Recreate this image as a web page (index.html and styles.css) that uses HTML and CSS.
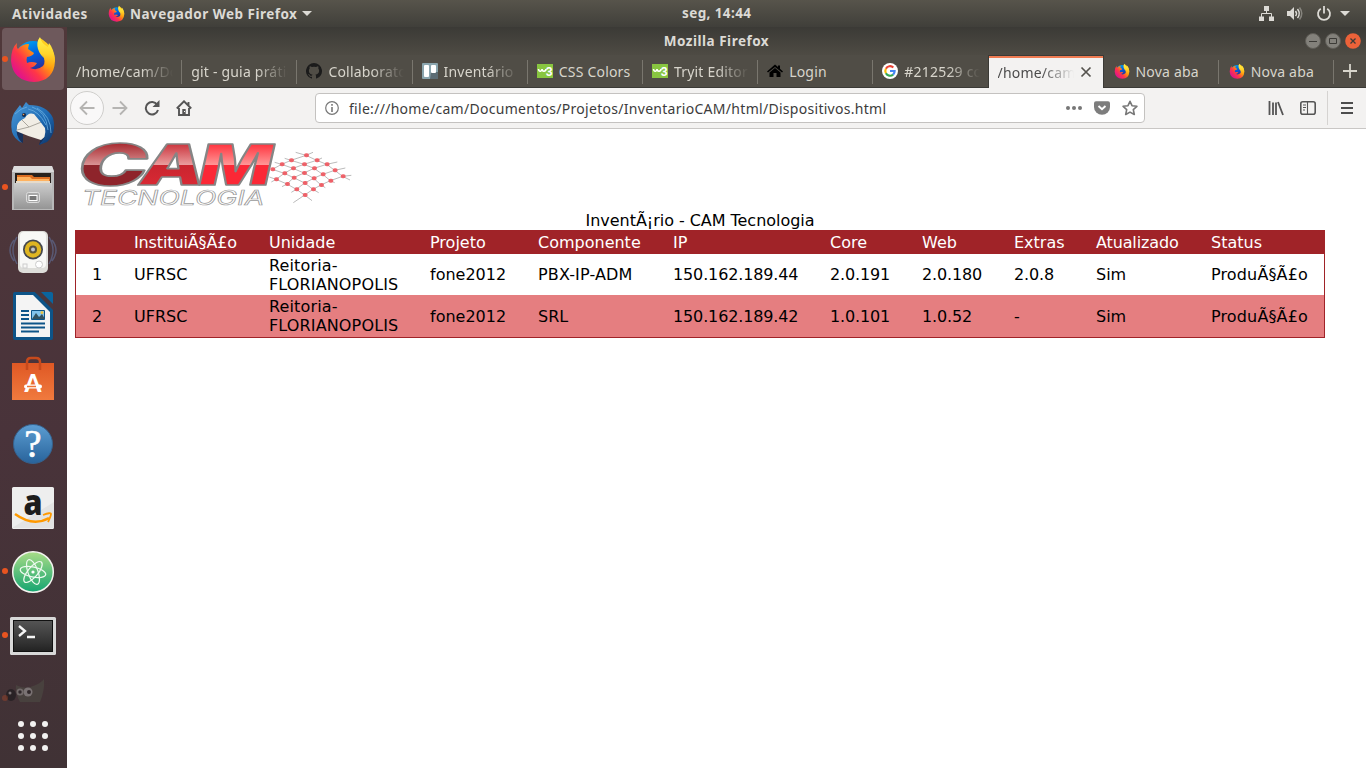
FILE: index.html
```html
<!DOCTYPE html>
<html lang="pt-BR">
<head>
<meta charset="utf-8">
<title>Mozilla Firefox</title>
<link rel="stylesheet" href="styles.css">
</head>
<body>
<svg class="defs" width="0" height="0">
  <defs>
    <linearGradient id="fxBody" x1="0.9" y1="0.1" x2="0.15" y2="0.8"><stop offset="0" stop-color="#ffe226"/><stop offset=".4" stop-color="#ff980e"/><stop offset=".7" stop-color="#ff3647"/><stop offset="1" stop-color="#e31587"/></linearGradient>
    <linearGradient id="fxGlobe" x1="0" y1="0" x2=".4" y2="1"><stop offset="0" stop-color="#00b3f4"/><stop offset=".5" stop-color="#0060df"/><stop offset="1" stop-color="#362487"/></linearGradient>
    <linearGradient id="fxTail" x1="0" y1="0" x2="0" y2="1"><stop offset="0" stop-color="#fff44f"/><stop offset=".5" stop-color="#ffd52c"/><stop offset="1" stop-color="#ffa60e" stop-opacity="0"/></linearGradient>
    <symbol id="firefox" viewBox="0 0 48 48">
      <circle cx="24" cy="24" r="18" fill="url(#fxGlobe)"/>
      <path fill="url(#fxBody)" d="M8 8 Q7 12 9 14 Q13 9 20 9 L19 14 L25 18 Q24 21 18 22 Q17 25 18 28 Q22 26 28 28 Q26 32 21 33 Q28 36 34 31 Q37 27 34 20 Q29 14 31 3 Q46 12 46 26 Q45 46 25 47 Q4 46 2 26 Q2 13 8 8Z"/>
      <path fill="url(#fxTail)" d="M31 2 Q27 7 29 14 Q31 20 35 23 Q38 29 33 36 Q44 34 46 25 Q45 14 40 8 L39 12 Q32 8 31 2Z"/>
    </symbol>
    <symbol id="w3" viewBox="0 0 16 16"><path fill="#88c540" d="M0 1h16v14H0z"/><path d="M1.500 6q.3 2.500 2 2.200Q5 8 5 6q.2 2.300 2 2.200Q9 8 9 6" fill="none" stroke="#fff" stroke-width="1.600"/><text x="8.700" y="12.500" font-size="12" font-weight="700" fill="#fff" font-family="Roboto, sans-serif">3</text></symbol>
  </defs>
</svg>

<header class="panel">
  <div class="panel-left">
    <span class="activities">Atividades</span>
    <svg width="17" height="17"><use href="#firefox"/></svg>
    <span class="appname">Navegador Web Firefox</span>
    <i class="caret"></i>
  </div>
  <div class="clock">seg, 14:44</div>
  <div class="panel-right">
    <svg width="16" height="16" viewBox="0 0 16 16"><path fill="#dcdad5" d="M5 0h5v5H5zM0 10.500h5V15H0zM10 10.500h5V15h-5z"/><path d="M7.500 5v2.500M2.500 11V7.500h10V11" fill="none" stroke="#dcdad5"/></svg>
    <svg width="16" height="16" viewBox="0 0 16 16"><path fill="#dcdad5" d="M0 5h3l4-4v13l-4-4H0z"/><g fill="none" stroke="#dcdad5" stroke-width="1.500"><path d="M8.500 5q2 2.500 0 5"/><path d="M10.500 3q3.500 4.500 0 9"/><path d="M12.500 1.500q4.500 6 0 12" opacity=".4"/></g></svg>
    <svg width="16" height="16" viewBox="0 0 16 16"><path d="M4.800 2.800a6 6 0 1 0 6.400 0M8 0v7.500" fill="none" stroke="#dcdad5" stroke-width="1.800"/></svg>
    <i class="caret"></i>
  </div>
</header>

<div class="desktop">
  <nav class="dock">
    <div class="slot active running"><svg width="48" height="48" viewBox="0 0 48 48"><use href="#firefox"/></svg></div>
    <div class="slot"><svg width="48" height="48" viewBox="0 0 48 48">
      <defs><linearGradient id="tb" x1="0" y1="0" x2="1" y2="1"><stop offset="0" stop-color="#4c9bda"/><stop offset=".6" stop-color="#1b67b0"/><stop offset="1" stop-color="#0d2e60"/></linearGradient></defs>
      <path fill="#18305a" d="M3 26Q5 39 14 43L14 34zM30 45Q44 40 45 26L34 30z"/>
      <path fill="#f1ede5" d="M9 20L22 12L37 19L38 35L32 40Q18 36 7 31z"/><path d="M12 19L20 27L35 21M20 27L8 30" stroke="#aaa69d" fill="none"/>
      <path fill="url(#tb)" d="M3 32Q1 21 5 13L11 5L13 8L17 2L20 5Q38 5 44 18Q48 33 38 42L30 45Q38 37 36 28Q31 21 25 14Q19 12 16 18Q9 21 8 26Q6 36 13 43Q5 39 3 32z"/>
      <path d="M23 7Q37 11 39 30M28 8Q42 16 42 33M19 9Q30 11 37 25M6 14Q12 8 18 7" stroke="#6bb0e2" stroke-width=".8" fill="none"/><circle cx="15" cy="15" r="2" fill="#12294b"/><circle cx="14.500" cy="14.500" r=".8" fill="#f79b4d"/>
    </svg></div>
    <div class="slot running"><svg width="48" height="48" viewBox="0 0 48 48">
      <defs><linearGradient id="fl" x1="0" y1="0" x2="0" y2="1"><stop offset="0" stop-color="#cdcdcd"/><stop offset="1" stop-color="#959595"/></linearGradient></defs>
      <path fill="#b8b8b8" d="M5 2h38l2 5v39H3V7z"/><path fill="#ddd" d="M5 2h38l2 6H3z"/><path fill="#28211d" d="M6 9h36v13H6z"/><path fill="#dc6e23" d="M8 11h15l2 2h16v8H8z"/><path fill="#ffb25f" d="M8 13h13l2 2h17v2H8z"/><path fill="#e7dbc9" d="M7 17h34v3H7z"/><path fill="url(#fl)" d="M5 19h38v26H5z"/><rect x="17.500" y="28.500" width="13" height="10" rx="2" fill="#a8a8a8" stroke="#ddd"/><rect x="20" y="31.500" width="8" height="5" fill="#777" stroke="#fff"/>
    </svg></div>
    <div class="slot"><svg width="48" height="48" viewBox="0 0 48 48">
      <g fill="none" stroke="#667cac" stroke-width="1.500" opacity=".5"><path d="M8 9Q0 22 8 36M5 12Q-3 22 5 33M40 9Q48 22 40 36M43 12Q51 22 43 33"/></g>
      <rect x="9" y="3" width="30" height="42" rx="5" fill="#dededa"/><rect x="11" y="4" width="26" height="36" rx="4" fill="#f8f8f6"/><circle cx="24" cy="21.500" r="10" fill="#44474d"/><circle cx="24" cy="21.500" r="8.300" fill="#dfb521"/><circle cx="24" cy="21.500" r="4" fill="#5a5340"/><circle cx="24" cy="21.500" r="2" fill="#c0c4cc"/><circle cx="30" cy="36.500" r="3.500" fill="#fff" stroke="#ccc"/><rect x="14" y="36" width="4" height="4" fill="none" stroke="#ccc"/>
    </svg></div>
    <div class="slot"><svg width="48" height="48" viewBox="0 0 48 48">
      <path fill="#0d5488" d="M4 2Q4 0 6 0h20l18 16v30q0 2-2 2H6q-2 0-2-2z"/><path fill="#f4f4f4" d="M7 3h17l17 17v25H7z"/><path fill="#4a373c" d="M26 0h6l12 12v6z"/><path fill="#0a659e" d="M32 0h10q2 0 2 2v10z"/><g stroke="#0d5488" stroke-width="2"><path d="M12 19h8M12 23h8M12 27h8M12 31.500h24M12 35.500h24M12 39.500h18"/></g><path fill="#82c3eb" stroke="#0d5488" d="M22.500 18.500h13v9h-13z"/><path fill="#33525f" d="M23 27l4-6 3 4 3-3 3 5z"/><circle cx="33" cy="20.500" r="1.500" fill="#e9c344"/>
    </svg></div>
    <div class="slot"><svg width="48" height="48" viewBox="0 0 48 48">
      <defs><linearGradient id="sw" x1="0" y1="0" x2="0" y2="1"><stop offset="0" stop-color="#df5824"/><stop offset="1" stop-color="#f07a3e"/></linearGradient></defs>
      <path fill="url(#sw)" d="M3 7h42v37H3z"/><path fill="none" stroke="#c74a1c" stroke-width="2.500" d="M18 14V6q0-4 4-4h5q4 0 4 4v8"/>
      <text x="24" y="36" text-anchor="middle" font-family="Lato, sans-serif" font-size="24" font-weight="900" fill="#fff">A</text><rect x="15" y="28.500" width="18" height="4" rx="2" fill="#fff"/><path d="M18 30.500h9" stroke="#ee7336" stroke-width="1.500"/>
    </svg></div>
    <div class="slot"><svg width="48" height="48" viewBox="0 0 48 48">
      <defs><linearGradient id="hp" x1="0" y1="0" x2="0" y2="1"><stop offset="0" stop-color="#5c9dd2"/><stop offset="1" stop-color="#28639b"/></linearGradient></defs>
      <circle cx="24" cy="24" r="19.500" fill="url(#hp)" stroke="#36618c"/><text x="24" y="36.500" text-anchor="middle" font-family="Liberation Serif, serif" font-size="39" fill="#fff" stroke="#fff" stroke-width=".6">?</text>
    </svg></div>
    <div class="slot"><svg width="48" height="48" viewBox="0 0 48 48">
      <rect x="3" y="3" width="42" height="42" rx="1.500" fill="#eee"/><path fill="#e3e3e3" d="M3 44L45 18v26z"/><text x="24" y="31" text-anchor="middle" font-family="Open Sans, sans-serif" font-weight="800" font-size="36" fill="#1d1d1d" textLength="19" lengthAdjust="spacingAndGlyphs">a</text><path d="M6 30Q24 43 40 34" fill="none" stroke="#f90" stroke-width="2.500"/><path d="M34 31q8-3 8-1t-3 8" fill="none" stroke="#f90" stroke-width="1.800"/>
    </svg></div>
    <div class="slot running"><svg width="48" height="48" viewBox="0 0 48 48">
      <defs><linearGradient id="at" x1="0" y1="0" x2="0" y2="1"><stop offset="0" stop-color="#a9dc87"/><stop offset="1" stop-color="#14a570"/></linearGradient></defs>
      <circle cx="24" cy="24" r="20.300" fill="url(#at)" stroke="#f3f3ef" stroke-width="1.500"/><g fill="none" stroke="#effaf1" stroke-width="1.200"><ellipse cx="24" cy="24" rx="13" ry="5" transform="rotate(12 24 24)"/><ellipse cx="24" cy="24" rx="13" ry="5" transform="rotate(70 24 24)"/><ellipse cx="24" cy="24" rx="13" ry="5" transform="rotate(130 24 24)"/></g><circle cx="24" cy="24" r="1.600" fill="#fff"/>
    </svg></div>
    <div class="slot running"><svg width="48" height="48" viewBox="0 0 48 48">
      <defs><linearGradient id="tm" x1="0" y1="0" x2="0" y2="1"><stop offset="0" stop-color="#555"/><stop offset=".7" stop-color="#333"/><stop offset="1" stop-color="#222"/></linearGradient></defs>
      <rect x="1" y="5" width="46" height="38" rx="1.500" fill="#d8d8d8"/><rect x="4.500" y="8.500" width="39" height="31" fill="url(#tm)" stroke="#111"/><path d="M10 14l6 5-6 5M18 25h8" fill="none" stroke="#f5f5f5" stroke-width="2.300"/>
    </svg></div>
    <div class="slot slot-cut running"><svg width="48" height="32" viewBox="0 0 48 32">
      <path fill="#4b4641" d="M10 10Q20 15 27 11Q34 9 38 4Q39 15 34 27H14Q9 18 10 10z"/><ellipse cx="5" cy="20" rx="5" ry="6" fill="#211d20"/><circle cx="14" cy="17" r="3.500" fill="#827d7c"/><circle cx="22" cy="17" r="4.500" fill="#8d8888"/><circle cx="14" cy="17" r="1.700" fill="#2b2527"/><circle cx="23" cy="17" r="2" fill="#2b2527"/><circle cx="4" cy="18" r="1.500" fill="#8d8888"/>
    </svg></div>
    <div class="apps"><i></i><i></i><i></i><i></i><i></i><i></i><i></i><i></i><i></i></div>
  </nav>

  <main class="window">
    <div class="titlebar">
      <span class="title">Mozilla Firefox</span>
      <div class="controls">
        <svg width="16" height="16"><circle cx="8" cy="8" r="7.500" fill="#83817b" stroke="#5f5d57"/><path d="M4 8.500h8" stroke="#3c3b37"/></svg>
        <svg width="16" height="16"><circle cx="8" cy="8" r="7.500" fill="#83817b" stroke="#5f5d57"/><path d="M4.500 5.500h7v5h-7z" fill="none" stroke="#3c3b37"/></svg>
        <svg width="16" height="16"><circle cx="8" cy="8" r="7.800" fill="#ec6239"/><path d="M5.500 5.500l5 5m0-5l-5 5" stroke="#3c3b37" stroke-width="1.300"/></svg>
      </div>
    </div>
    <div class="tabs">
      <div class="tab"><span>/home/cam/Do</span></div>
      <div class="tab"><span>git - guia prático</span></div>
      <div class="tab"><svg width="16" height="16" viewBox="0 0 16 16"><path fill="#1b1b1b" d="M8 0a8 8 0 0 0-2.500 15.600c.4.100.5-.2.500-.4v-1.400c-2.200.5-2.700-1-2.700-1-.4-.9-.9-1.200-.9-1.200-.7-.5.1-.5.100-.5.800.1 1.200.8 1.200.8.700 1.300 1.900.9 2.300.7.100-.5.300-.9.500-1.100C4.700 11.300 2.900 10.600 2.900 7.500c0-.9.300-1.600.8-2.100-.1-.2-.4-1 .1-2.100 0 0 .7-.2 2.200.8a7.700 7.700 0 0 1 4 0c1.500-1 2.200-.8 2.200-.8.400 1.100.2 1.900.1 2.100.5.600.8 1.300.8 2.100 0 3.100-1.900 3.800-3.700 4 .3.200.6.700.6 1.500v2.200c0 .2.100.5.500.4A8 8 0 0 0 8 0z"/></svg><span>Collaborators</span></div>
      <div class="tab"><svg width="16" height="16"><rect width="16" height="16" rx="1" fill="#8aa5ae"/><path fill="#5c6c74" d="M9 9h7v7H8z"/><rect x="2" y="2" width="5" height="12" rx="1" fill="#fff"/><rect x="9" y="2" width="5" height="8" rx="1" fill="#fff"/></svg><span>Inventário |</span></div>
      <div class="tab"><svg width="16" height="16"><use href="#w3"/></svg><span>CSS Colors</span></div>
      <div class="tab"><svg width="16" height="16"><use href="#w3"/></svg><span>Tryit Editor v3</span></div>
      <div class="tab"><svg width="16" height="16"><path d="M8 1.500l3 2.500V2.500h2v3.200L16 8.500l-1 1L8 4 1 9.500l-1-1zM8 5l5.500 4.500V14H9.500v-4h-3v4h-4V9.500z"/></svg><span>Login</span></div>
      <div class="tab"><svg width="16" height="16"><circle cx="8" cy="8" r="8" fill="#fff"/><g fill="none" stroke-width="2.200"><path d="M11.300 4.500A4.700 4.700 0 0 0 3.900 5.700" stroke="#ea4335"/><path d="M3.900 5.700a4.700 4.700 0 0 0 0 4.600" stroke="#fbbc05"/><path d="M3.900 10.300a4.700 4.700 0 0 0 7.200 1.300" stroke="#34a853"/><path d="M11.100 11.600A4.700 4.700 0 0 0 12.600 8H8" stroke="#4285f4"/></g></svg><span>#212529 co</span></div>
      <div class="tab current"><span>/home/cam/</span><svg width="12" height="12"><path d="M1.500 1.500l9 9m0-9l-9 9" stroke="#55534e" stroke-width="1.700"/></svg></div>
      <div class="tab"><svg width="16" height="16"><use href="#firefox"/></svg><span>Nova aba</span></div>
      <div class="tab"><svg width="16" height="16"><use href="#firefox"/></svg><span>Nova aba</span></div>
      <div class="newtab"><svg width="14" height="14"><path d="M7 0v14M0 7h14" stroke="#d8d5cc" stroke-width="1.800"/></svg></div>
    </div>
    <div class="toolbar">
      <div class="nav">
        <span class="back"><svg width="16" height="16"><path d="M15.500 8H1.500M8 1.500L1.500 8 8 14.500" fill="none" stroke="#b5b4b2" stroke-width="1.800"/></svg></span>
        <svg width="16" height="16"><path d="M.5 8h14M8 1.500L14.500 8 8 14.500" fill="none" stroke="#b5b4b2" stroke-width="1.800"/></svg>
        <svg width="16" height="16"><path d="M13.200 4.800A6.200 6.200 0 1 0 14 10" fill="none" stroke="#555" stroke-width="2"/><path d="M15.500 0v7h-7z" fill="#555"/></svg>
        <svg width="16" height="16"><path d="M.8 8.500L8 1.300l7.200 7.200M3 8v7h10V8M12.500 2v3" fill="none" stroke="#555" stroke-width="1.900"/><path d="M6.300 9h3.400v6H6.300z" fill="#555"/><path d="M8 11h1v1H8z" fill="#fff"/></svg>
      </div>
      <div class="urlbar">
        <svg width="14" height="14"><circle cx="7" cy="7" r="6.300" fill="none" stroke="#777" stroke-width="1.200"/><path d="M7 6v5M7 3v1.800" stroke="#777" stroke-width="1.600"/></svg>
        <span class="url">file:///home/cam/Documentos/Projetos/InventarioCAM/html/Dispositivos.html</span>
        <svg width="18" height="16"><g fill="#777"><circle cx="4" cy="8" r="2"/><circle cx="10" cy="8" r="2"/><circle cx="16" cy="8" r="2"/></g></svg>
        <svg width="16" height="16"><path d="M2 1.200h12q2 0 2 2V7a8 7.800 0 0 1-16 0V3.200q0-2 2-2z" fill="#7d7d7d"/><path d="M4.500 6L8 9.300 11.500 6" fill="none" stroke="#fff" stroke-width="1.900"/></svg>
        <svg width="16" height="16"><path d="M8 1.300l2 4.400 4.900.6-3.600 3.300 1 4.900L8 12.100l-4.300 2.400 1-4.900L1.100 6.300 6 5.700z" fill="none" stroke="#777" stroke-width="1.600" stroke-linejoin="round"/></svg>
      </div>
      <div class="tools">
        <svg width="16" height="16"><path d="M1.500 1v14M5 2.500V15M8 2.500V15M10 2l5 13" stroke="#555" stroke-width="1.800" fill="none"/></svg>
        <svg width="16" height="16"><rect x=".8" y="1.800" width="14.400" height="12.400" rx="2" fill="none" stroke="#555" stroke-width="1.600"/><path d="M7.500 2v12M3 5h3M3 7.500h3M3 10h2" stroke="#555" stroke-width="1.100"/></svg>
        <span class="menu"><svg width="12" height="14"><path d="M0 2h12M0 7h12M0 12h12" stroke="#4d4d4d" stroke-width="1.800"/></svg></span>
      </div>
    </div>
    <section class="page">
      <svg class="logo" width="280" height="74" viewBox="21 21 840 222">
        <defs>
          <linearGradient id="g1" gradientUnits="userSpaceOnUse" x1="0" y1="40" x2="0" y2="168"><stop offset="0" stop-color="#a82a30"/><stop offset=".5" stop-color="#d99293"/><stop offset=".51" stop-color="#8e242b"/><stop offset="1" stop-color="#8e242b"/></linearGradient>
          <linearGradient id="g2" gradientUnits="userSpaceOnUse" x1="0" y1="40" x2="0" y2="168"><stop offset="0" stop-color="#cb323b"/><stop offset=".5" stop-color="#e99c9d"/><stop offset=".51" stop-color="#c9252f"/><stop offset="1" stop-color="#d92934"/></linearGradient>
          <linearGradient id="g3" gradientUnits="userSpaceOnUse" x1="0" y1="40" x2="0" y2="168"><stop offset="0" stop-color="#ff303b"/><stop offset=".5" stop-color="#ff9696"/><stop offset=".51" stop-color="#fb2836"/><stop offset="1" stop-color="#fb2836"/></linearGradient>
        </defs>
        <g class="brand">
          <text x="30" y="165" textLength="208" lengthAdjust="spacingAndGlyphs" fill="url(#g1)">C</text>
          <text x="216" y="165" textLength="194" lengthAdjust="spacingAndGlyphs" fill="url(#g2)">A</text>
          <text x="394" y="165" textLength="220" lengthAdjust="spacingAndGlyphs" fill="url(#g3)">M</text>
        </g>
        <text class="subbrand" x="42" y="226" textLength="546" lengthAdjust="spacingAndGlyphs">TECNOLOGIA</text>
        <g fill="none" stroke="#999" stroke-width="2">
          <path d="M683 67L714 76L746 91L776 103L800 121L824 139L846 150M650 85L669 91L708 103L738 115L764 133L787 152L800 158M620 97L641 103L675 115L708 129L737 145L759 165L772 173M613 118L649 130L677 143L710 159L735 178L752 188M604 141L624 148L657 162L685 178L710 195L732 212"/>
          <path d="M735 67L714 76L669 91L641 103L613 118M808 96L776 103L738 115L708 129L677 143L657 162L642 170M762 84L746 91L708 103L675 115L649 130L624 148L610 156M832 114L800 121L764 133L737 145L710 159L685 178L670 187M850 136L824 139L787 152L759 165L735 178L710 195L676 218"/>
        </g>
        <path class="nodes" d="M714 76h3M669 91h3M746 91h3M641 103h3M708 103h3M776 103h3M613 118h3M675 115h3M738 115h3M800 121h3M649 130h3M708 129h3M764 133h3M824 139h3M624 148h3M677 143h3M737 145h3M787 152h3M657 162h3M710 159h3M759 165h3M685 178h3M735 178h3M710 195h3"/>
      </svg>
      <table>
        <caption>InventÃ¡rio - CAM Tecnologia</caption>
        <colgroup><col class="c-num"><col class="c-inst"><col class="c-unit"><col class="c-proj"><col class="c-comp"><col class="c-ip"><col class="c-core"><col class="c-web"><col class="c-extra"><col class="c-upd"><col class="c-status"></colgroup>
        <thead><tr><th></th><th class="snug">InstituiÃ§Ã£o</th><th>Unidade</th><th>Projeto</th><th>Componente</th><th>IP</th><th>Core</th><th>Web</th><th>Extras</th><th class="snug">Atualizado</th><th>Status</th></tr></thead>
        <tbody>
          <tr><td>1</td><td>UFRSC</td><td class="loose">Reitoria-<br>FLORIANOPOLIS</td><td>fone2012</td><td class="loose">PBX-IP-ADM</td><td class="snug">150.162.189.44</td><td class="snug">2.0.191</td><td class="snug">2.0.180</td><td class="snug">2.0.8</td><td>Sim</td><td class="loose">ProduÃ§Ã£o</td></tr>
          <tr class="alt"><td>2</td><td>UFRSC</td><td class="loose">Reitoria-<br>FLORIANOPOLIS</td><td>fone2012</td><td>SRL</td><td class="snug">150.162.189.42</td><td class="snug">1.0.101</td><td class="snug">1.0.52</td><td>-</td><td>Sim</td><td class="loose">ProduÃ§Ã£o</td></tr>
        </tbody>
      </table>
    </section>
  </main>
</div>
</body>
</html>
```
FILE: styles.css
```css
* { box-sizing: border-box; }
body { margin: 0; width: 1366px; height: 768px; overflow: hidden; display: flex; flex-direction: column; font: 14px/20px "Noto Sans", sans-serif; }
svg { display: block; flex: none; }
.defs { position: absolute; }

.panel { height: 27px; flex: none; display: grid; grid-template-columns: 670px auto 1fr; align-items: center; padding: 0 16px 0 12px; background: linear-gradient(#57544b, #403f3a); color: #dcdad5; font-weight: 700; font-size: 13.5px; letter-spacing: .48px; }
.panel-left, .panel-right { display: flex; align-items: center; }
.panel-left svg { margin: 0 5px 0 20px; }
.panel-right { justify-content: flex-end; gap: 12.5px; }
.panel-right .caret { margin-left: -4px; }
.activities { width: 76px; white-space: nowrap; }
.appname { width: 167px; white-space: nowrap; }
.caret { border: 5px solid transparent; border-top-color: #dcdad5; border-bottom: 0; margin-left: 5px; }
.clock { letter-spacing: .4px; margin-top: -1px; }

.desktop { flex: 1; min-height: 0; display: flex; }
.dock { width: 67px; flex: none; display: flex; flex-direction: column; align-items: flex-start; background: linear-gradient(#50383a, #49333a 55%, #403235); }
.slot { width: 67px; height: 64px; flex: none; position: relative; display: flex; align-items: center; justify-content: center; padding: 1px 1px 0 0; }
.slot.active { padding-top: 0; }
.slot.active::before { content: ""; position: absolute; inset: 1px 3px 1px 2px; border-radius: 4px; background: #6e595c; }
.slot svg { position: relative; }
.slot.running::after { content: ""; position: absolute; left: 2px; top: 29px; width: 6px; height: 6px; border-radius: 50%; background: #e95420; }
.slot-cut { height: 37px; opacity: .75; }
.slot-cut svg { margin: 10px 6px 0 0; }
.slot-cut.running::after { top: 28px; opacity: .35; }
.apps { margin: 17px 0 0 18px; display: grid; grid-template-columns: repeat(3, 6px); gap: 6px; }
.apps i { width: 6px; height: 6px; border-radius: 50%; background: #f2f1f0; }

.window { flex: 1; min-width: 0; display: flex; flex-direction: column; background: #fff; }
.titlebar { height: 28px; flex: none; display: flex; align-items: center; justify-content: center; position: relative; background: linear-gradient(#3b3a36, #4e4b44); color: #dcdad5; font-weight: 700; font-size: 13.5px; letter-spacing: .5px; }
.controls { position: absolute; right: 5px; top: 6px; display: flex; gap: 4px; }
.tabs { height: 33px; flex: none; display: flex; background: #504d46; border-bottom: 1px solid #3b3a36; color: #d8d5cc; letter-spacing: .2px; }
.tab { width: 115.2px; flex: none; display: flex; align-items: center; gap: 6px; padding: 0 9px; position: relative; }
.tab::after { content: ""; position: absolute; right: 0; top: 5px; width: 1px; height: 24px; background: #79766e; }
.tab span { flex: 1; min-width: 0; padding-top: 2px; overflow: hidden; white-space: nowrap; -webkit-mask-image: linear-gradient(90deg, #000 calc(100% - 32px), transparent); mask-image: linear-gradient(90deg, #000 calc(100% - 32px), transparent); }
.tab:nth-child(5) span, .tab:nth-child(7) span, .tab:nth-child(10) span, .tab:nth-child(11) span { -webkit-mask-image: none; mask-image: none; }
.tab.current { width: 116px; margin: 0 0 -1px -1px; background: #f3f2f1; color: #4c4c4c; border: 1px solid #3b3a36; border-width: 1px 1px 0; box-shadow: inset 0 2px #ef7b52; padding: 0 11px 0 9px; }
.tab.current::after, .tab:nth-child(8)::after { display: none; }
.tab.current ~ .tab { padding-left: 10px; }
.newtab { flex: 1; display: flex; align-items: center; padding-left: 9px; }

.toolbar { height: 41px; flex: none; display: flex; align-items: center; background: #f3f2f1; border-bottom: 1px solid #c9c7c5; }
.nav { width: 248px; display: flex; align-items: center; gap: 16px; padding-left: 3px; }
.back { width: 34px; height: 34px; border: 1px solid #cfcecc; border-radius: 50%; background: #f9f8f8; display: grid; place-items: center; margin-right: -8px; }
.urlbar { width: 830px; height: 30px; display: flex; align-items: center; gap: 12px; padding: 0 6px 0 9px; background: #fff; border: 1px solid #c4c2c0; border-radius: 4px; color: #3c3c3c; }
.url { flex: 1; white-space: nowrap; margin-left: -2px; padding-top: 2px; letter-spacing: .29px; }
.tools { flex: 1; display: flex; align-items: center; justify-content: flex-end; gap: 16px; }
.menu { height: 34px; border-left: 1px solid #d5d3d1; margin-left: -5px; padding: 10px 13px 0 13px; }

.page { padding: 8px; color: #000; font: 16px/19px "DejaVu Sans", sans-serif; }
.brand text { font: italic 900 171px Inter, "Liberation Sans", sans-serif; stroke: #858585; stroke-width: 5px; stroke-linejoin: round; }
.subbrand { font: italic 400 59px Inter, "Liberation Sans", sans-serif; fill: #fff; stroke: #999; stroke-width: 2px; }
.nodes { stroke: #f0565e; stroke-width: 12px; stroke-linecap: round; opacity: .9; }
table { width: 1250px; table-layout: fixed; border: 1px solid #a02328; border-spacing: 0; }
caption { height: 19px; padding: 0; letter-spacing: -.04px; }
.c-num { width: 42px; }
.c-inst, .c-comp { width: 135px; }
.c-unit { width: 161px; }
.c-proj { width: 108px; }
.c-ip { width: 157px; }
.c-core, .c-web { width: 92px; }
.c-extra { width: 82px; }
.c-upd { width: 115px; }
.c-status { width: 129px; }
th, td { padding: 0 0 0 16px; text-align: left; font-weight: 400; white-space: nowrap; }
.snug { letter-spacing: -.13px; }
.loose { letter-spacing: .14px; }
th { height: 23px; background: #a02328; color: #fff; }
td { height: 41px; }
.alt td { height: 42px; background: #e57e80; }
```
